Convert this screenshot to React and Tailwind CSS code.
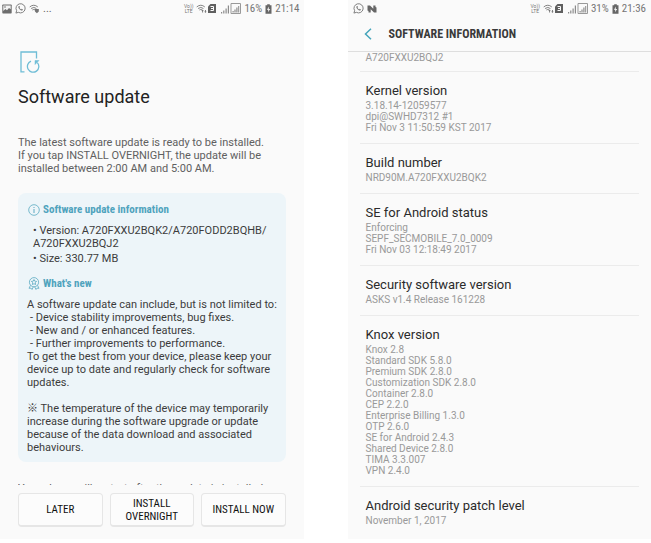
import clsx from 'clsx'

const knoxLines = [
  'Knox 2.8',
  'Standard SDK 5.8.0',
  'Premium SDK 2.8.0',
  'Customization SDK 2.8.0',
  'Container 2.8.0',
  'CEP 2.2.0',
  'Enterprise Billing 1.3.0',
  'OTP 2.6.0',
  'SE for Android 2.4.3',
  'Shared Device 2.8.0',
  'TIMA 3.3.007',
  'VPN 2.4.0',
]

const infoItems = [
  { title: 'Kernel version', lines: ['3.18.14-12059577', 'dpi@SWHD7312 #1', 'Fri Nov 3 11:50:59 KST 2017'] },
  { title: 'Build number', lines: ['NRD90M.A720FXXU2BQK2'] },
  { title: 'SE for Android status', lines: ['Enforcing', 'SEPF_SECMOBILE_7.0_0009', 'Fri Nov 03 12:18:49 2017'] },
  { title: 'Security software version', lines: ['ASKS v1.4 Release 161228'] },
  { title: 'Knox version', lines: knoxLines },
  { title: 'Android security patch level', lines: ['November 1, 2017'] },
]

function ImageIcon() {
  return (
    <svg viewBox="0 0 10 10" className="h-[10px] w-[10px]">
      <path d="M1 .5h8q.7 0 .7.7v7.6q0 .7-.7.7H1q-.7 0-.7-.7V1.2Q.3.5 1 .5z" fill="#6d6d6d" />
      <path d="M1.3 1.6h7.4v3.6L7 4 5 6.2 3.4 5 1.3 7z" fill="#f4f4f4" />
      <circle cx="3" cy="3" r=".8" fill="#6d6d6d" />
    </svg>
  )
}

function WhatsAppIcon() {
  return (
    <svg viewBox="0 0 12 12" className="h-[11px] w-[11px]">
      <path d="M1 11l.8-2.6a5 5 0 1 1 1.9 1.8z" fill="none" stroke="#757575" />
      <path d="M4.3 3.2c-.9.5-.8 1.8.2 3.1s2.4 2.3 3.4 1.9c.6-.3.8-.8.7-1.1l-1.3-.7-.6.7C5.9 6.8 5.2 6.1 4.8 5.3l.6-.7-.5-1.3z" fill="#757575" />
    </svg>
  )
}

function WifiIcon({ variant }) {
  return (
    <svg viewBox="0 0 12 12" className="h-[11px] w-[11px]" fill="none" stroke="#757575">
      <path d="M.8 4.3q4.4-3.7 8.8 0M2.3 6q2.9-2.3 5.8 0M3.7 7.6q1.5-1.1 3 0" />
      {variant === 'locked' ? (
        <>
          <path d="M6.5 6.5h4.2v2.7L8.6 11.200 6.5 9.200z" fill="#757575" stroke="none" />
        </>
      ) : (
        <>
          <path d="M7.2 7l1.3 1.6h-.8v1.7h-1V8.600h-.8z" fill="#757575" stroke="none" />
          <path d="M10.300 10.800L9 9.200h.8V7.500h1v1.700h.8z" fill="#757575" stroke="none" />
        </>
      )}
    </svg>
  )
}

function NougatIcon() {
  return (
    <svg viewBox="0 0 10 8" className="h-2 w-[10px]">
      <path d="M.5.5H3L6.3 3.8V.5h2.2V2l1 .6V7.5H7L3.7 4.200V7.500H1.500V6l-1-.6z" fill="#666" />
    </svg>
  )
}

function SignalIcon() {
  return (
    <svg viewBox="0 0 20 11" className="ml-[2px] h-[11px] w-5" fill="#8a8a8a">
      <path d="M0 9h1.200v1.500H0zM2.200 7.500h1.200v3H2.200zM4.500 5.500h1.200v5H4.500zM6.800 2.500h1.200v8H6.800z" />
      <path d="M10 .5h9.500v10H10z" fill="none" stroke="#999" />
      <path d="M11.500 8h1.200v1.500h-1.200zM13.400 6.500h1.200v3h-1.200zM15.300 4.500h1.200v5h-1.200zM17.200 3h1v6.500h-1z" />
    </svg>
  )
}

function BatteryIcon() {
  return (
    <svg viewBox="0 0 7 10" className="h-[10px] w-[7px]">
      <path d="M2.200.3h2.600v1H6.500V9.700H.5V1.300h1.700z" fill="#666" />
      <path d="M4 2.500L1.900 5.700h1.400L3 8.300l2.200-3.400H3.700z" fill="#fafafa" />
    </svg>
  )
}

function StatusBar({ battery, time, children, className }) {
  return (
    <div className={clsx('flex h-[17px] items-center justify-between text-[11px] leading-[17px] text-[#757575]', className)}>
      <div className="flex items-center gap-[3px]">{children}</div>
      <div className="flex items-center gap-[3px]">
        <span className="text-center text-[5px] leading-[5px]">
          Vo))<br />LTE
        </span>
        <div className="flex items-center gap-px">
          <WifiIcon />
          <svg viewBox="0 0 8 9" className="h-[9px] w-2">
            <path d="M2.500 0H8v9H0V2.500z" fill="#5f5f5f" />
            <path d="M2.500 2.500h3v4h-3M3 4.500h2.500" fill="none" stroke="#fafafa" />
          </svg>
        </div>
        <SignalIcon />
        <span className="font-['Roboto_Condensed','Roboto',sans-serif]">{battery}</span>
        <BatteryIcon />
        <span className="font-['Roboto_Condensed','Roboto',sans-serif]">{time}</span>
      </div>
    </div>
  )
}

function CardHeading({ icon, children }) {
  return (
    <h2 className="flex items-center gap-[3px] font-['Roboto_Condensed','Roboto',sans-serif] text-[11px] leading-[13px] font-bold text-[#4fa3bd]">
      {icon}
      {children}
    </h2>
  )
}

function ActionButton({ children }) {
  return (
    <button className="flex h-[34px] flex-1 items-center justify-center rounded-[4px] border border-b-2 border-[#e6e6e6] bg-[#fcfcfc] font-['Roboto_Condensed','Roboto',sans-serif] text-[11px] leading-[13px] text-[#111]">
      {children}
    </button>
  )
}

function UpdateScreen() {
  return (
    <section className="min-w-0 flex-1 bg-[#fafafa] pb-3">
      <StatusBar battery="16%" time="21:14" className="pr-1 pl-[2px]">
        <ImageIcon />
        <WhatsAppIcon />
        <WifiIcon variant="locked" />
        <span className="text-[#666]">...</span>
      </StatusBar>
      <div className="px-[18px] pt-[34px]">
        <svg viewBox="0 0 20 22" className="ml-[2px] h-[22px] w-5" fill="none" stroke="#6fbdd6" strokeWidth="1.3">
          <path d="M4.500 20.800H1V1h15.500v6.500" />
          <path d="M11 10.200a5.700 5.700 0 1 0 6.300 1.400" />
          <path d="M15 13.500v-4h4z" fill="#6fbdd6" strokeWidth=".5" />
        </svg>
        <h1 className="mt-3 text-[18px] leading-6 text-[#222]">Software update</h1>
        <p className="mt-[27px] text-[11px] leading-[13px] text-[#606060]">
          The latest software update is ready to be installed.<br />
          If you tap INSTALL OVERNIGHT, the update will be<br />
          installed between 2:00 AM and 5:00 AM.
        </p>
        <div className="mt-[18px] rounded-lg bg-[#edf5f9] pt-[10px] pb-2 pl-[9px] text-[11px] leading-[13px] whitespace-nowrap text-[#3c3c3c]">
          <CardHeading
            icon={
              <svg viewBox="0 0 12 12" className="ml-[1px] h-3 w-3" fill="none" stroke="#5aa9c2">
                <circle cx="6" cy="6" r="5.300" strokeWidth=".8" />
                <path d="M6 5v4M6 3v1" />
              </svg>
            }
          >
            Software update information
          </CardHeading>
          <ul className="mt-2 pl-[6px]">
            <li>
              • Version: A720FXXU2BQK2/A720FODD2BQHB/<br />
              A720FXXU2BQJ2
            </li>
            <li className="mt-[2px] mb-3">• Size: 330.77 MB</li>
          </ul>
          <CardHeading
            icon={
              <svg viewBox="0 0 12 13" className="ml-[1px] h-[13px] w-3" fill="none" stroke="#5aa9c2" strokeWidth=".8">
                <circle cx="6" cy="5.200" r="4.600" />
                <path d="M6 2.500l.8 1.700 1.800.2-1.300 1.300.3 1.900L6 6.700l-1.600.9.3-1.900-1.300-1.300 1.800-.2z" />
                <path d="M2.500 8.300L1 11.300l2-.2 1 1.400 1.300-2.600M9.500 8.300l1.500 3-2-.2-1 1.400-1.300-2.600" />
              </svg>
            }
          >
            What's new
          </CardHeading>
          <div className="mt-2">
            <p>A software update can include, but is not limited to:</p>
            <ul className="pl-[3px]">
              <li>- Device stability improvements, bug fixes.</li>
              <li>- New and / or enhanced features.</li>
              <li>- Further improvements to performance.</li>
            </ul>
            <p>
              To get the best from your device, please keep your<br />
              device up to date and regularly check for software<br />
              updates.
            </p>
            <p className="mt-[13px]">
              ※ The temperature of the device may temporarily<br />
              increase during the software upgrade or update<br />
              because of the data download and associated<br />
              behaviours.
            </p>
          </div>
        </div>
        {/* next paragraph is scrolled under the button row */}
        <p className="mt-5 h-[3px] overflow-hidden text-[11px] leading-[13px] whitespace-nowrap text-[#606060]">
          Your phone will restart after the update is installed.
        </p>
        <div className="mt-2 flex gap-[7px]">
          <ActionButton>LATER</ActionButton>
          <ActionButton>
            INSTALL<br />OVERNIGHT
          </ActionButton>
          <ActionButton>INSTALL NOW</ActionButton>
        </div>
      </div>
    </section>
  )
}

function InfoScreen() {
  return (
    <section className="min-w-0 flex-1 bg-[#fafafa]">
      <StatusBar battery="31%" time="21:36" className="pr-[5px] pl-[5px]">
        <WhatsAppIcon />
        <NougatIcon />
      </StatusBar>
      <header className="flex h-[35px] items-center gap-[17px] border-b border-[#dedede] pl-4">
        <button aria-label="Back">
          <svg viewBox="0 0 8 12" className="h-3 w-2" fill="none" stroke="#45a5bb" strokeWidth="1.5">
            <path d="M7 .8L1.500 6 7 11.200" />
          </svg>
        </button>
        <h1 className="font-['Roboto_Condensed','Roboto',sans-serif] text-[12px] font-bold text-[#3a3a3a]">SOFTWARE INFORMATION</h1>
      </header>
      <ul className="px-3 text-[10px] leading-[11px] text-[#999]">
        <li className="border-b border-[#ebebeb] px-[6px] pb-2">A720FXXU2BQJ2</li>
        {infoItems.map((item) => (
          <li key={item.title} className="border-b border-[#ebebeb] px-[6px] pt-[11px] pb-[10px] last:border-0">
            <h2 className="mb-px text-[13px] leading-4 text-[#2b2b2b]">{item.title}</h2>
            {item.lines.map((line) => (
              <p key={line}>{line}</p>
            ))}
          </li>
        ))}
      </ul>
    </section>
  )
}

export default function App() {
  return (
    <main className="flex gap-11 bg-white font-['Roboto','Noto_Sans_CJK_JP',sans-serif]">
      <UpdateScreen />
      <InfoScreen />
    </main>
  )
}
